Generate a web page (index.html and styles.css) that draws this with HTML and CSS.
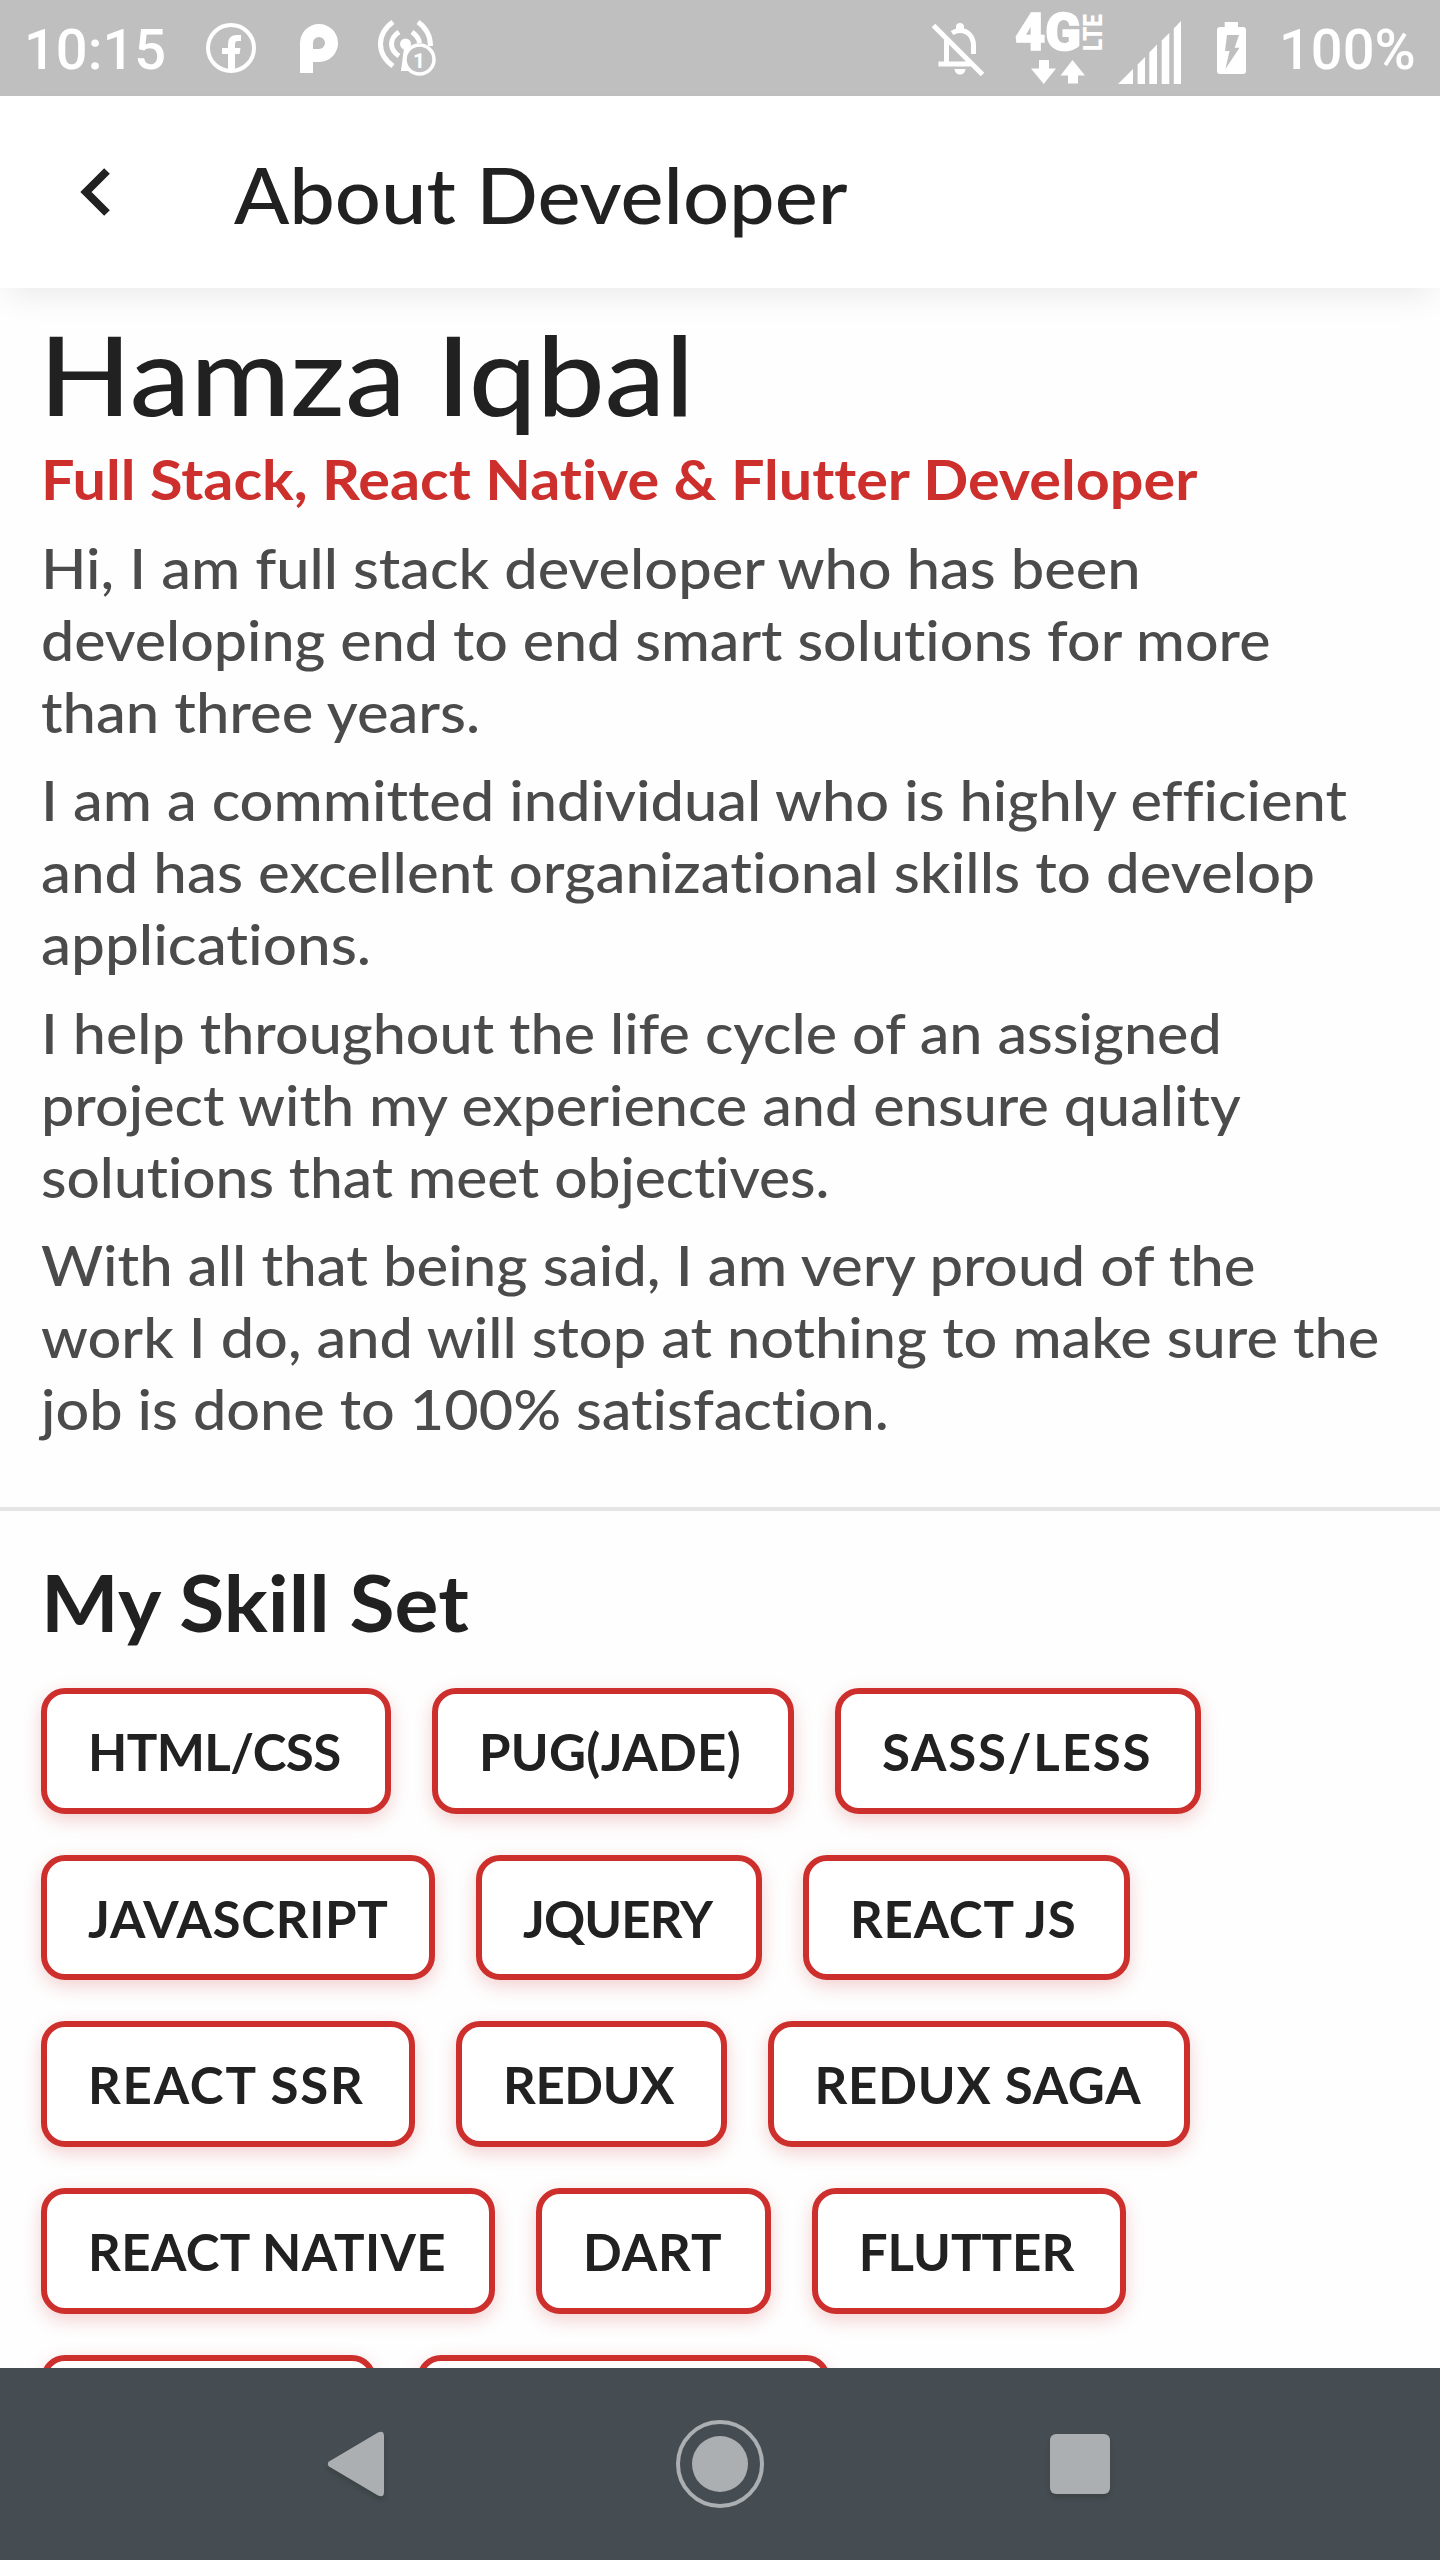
FILE: index.html
```html
<!DOCTYPE html>
<html lang="en">
<head>
<meta charset="utf-8">
<title>About Developer</title>
<link rel="stylesheet" href="styles.css">
</head>
<body>
<div class="screen">
  <div class="status">
    <span class="status-time">10:15</span>
    <svg width="64" height="96" viewBox="200 0 64 96"><circle cx="231" cy="48" r="23" fill="none" stroke="#fff" stroke-width="4"/><path fill="#fff" d="M228 72V54h-6v-6h6v-4q0-9 9-9h4v6h-3q-3 0-3 3v4h5.5l-1 6H235v18z"/></svg>
    <svg width="96" height="96" viewBox="264 0 96 96"><path fill="#fff" fill-rule="evenodd" d="M300 73V43a19 19 0 1 1 19 19h-6v11zM313 49h6a6 6 0 1 0-6-6z"/></svg>
    <svg width="90" height="96" viewBox="360 0 90 96"><g fill="none" stroke="#fff" stroke-width="5"><path d="M393 22q-12.500 9-12.500 22t12.500 22"/><path d="M399 32q-7.500 5-7.500 12t7.500 12"/><path d="M418 22q12.500 9 12.500 24"/><path d="M412 32q7 5 7.500 11"/></g><circle cx="405.500" cy="44" r="5.500" fill="#fff"/><path fill="#fff" d="M404 48h4v23h-7z"/><circle cx="419.500" cy="59.500" r="14.500" fill="#bfbfbf" stroke="#fff" stroke-width="3.500"/><text class="badge-number" x="419" y="67.500" text-anchor="middle">1</text></svg>
    <span class="status-gap"></span>
    <svg width="80" height="96" viewBox="920 0 80 96"><g fill="none" stroke="#fff" stroke-width="5"><path d="M933.500 25.500l49 49M938.500 64h32M946.500 40v23M952 33q4-2.500 8-2.500c8.500 0 13.500 7 13.500 15V54"/></g><path fill="#fff" d="M956 31v-4a4 4 0 0 1 8 0v4zM954.500 69h11a5.500 5.500 0 0 1-11 0z"/></svg>
    <svg width="110" height="96" viewBox="1000 0 110 96"><text class="net" x="1015" y="50" textLength="66" lengthAdjust="spacingAndGlyphs">4G</text><text class="lte" transform="translate(1102 51) rotate(-90)" textLength="37" lengthAdjust="spacingAndGlyphs">LTE</text><path fill="#fff" d="M1039 60h10v8.500h7L1043.700 84 1031 68.500h8zM1072.500 60l12.500 15.500h-7v8h-10v-8h-7.500z"/></svg>
    <svg width="80" height="96" viewBox="1110 0 80 96"><path fill="#fff" d="M1118 84l15-15v15zM1137.600 84V64.500l7.400-7.500v27zM1149.300 84V52.500l7.700-8v39.500zM1161.700 84V40.500l7.600-7.500v51zM1173.800 84V28.500l7.200-7.500v63z"/></svg>
    <svg width="89" height="96" viewBox="1190 0 89 96"><path fill="#fff" fill-rule="evenodd" d="M1224.700 27v-5h13.300v5h5q3 0 3 3v41q0 3-3 3h-23q-3 0-3-3V30q0-3 3-3zM1227 35l-2 16h4.500l-4.100 18 14.100-21.300h-4.800L1239 35z"/></svg>
    <span class="status-battery">100%</span>
  </div>

  <div class="header">
    <svg class="back" width="48" height="60" viewBox="72 162 48 60"><path d="M107 171l-21 21 21 21" fill="none" stroke="#212121" stroke-width="8"/></svg>
    <h1 class="header-title">About Developer</h1>
  </div>

  <div class="content">
    <div class="profile">
      <h2 class="name">Hamza Iqbal</h2>
      <div class="role">Full Stack, React Native &amp; Flutter Developer</div>
      <p class="bio"><span class="line l1">Hi, I am full stack developer who has been</span> <span class="line l2">developing end to end smart solutions for more</span> <span class="line l3">than three years.</span></p>
      <p class="bio"><span class="line l4">I am a committed individual who is highly efficient</span> <span class="line l5">and has excellent organizational skills to develop</span> <span class="line l6">applications.</span></p>
      <p class="bio"><span class="line l7">I help throughout the life cycle of an assigned</span> <span class="line l8">project with my experience and ensure quality</span> <span class="line l9">solutions that meet objectives.</span></p>
      <p class="bio"><span class="line l10">With all that being said, I am very proud of the</span> <span class="line l11">work I do, and will stop at nothing to make sure the</span> <span class="line l12">job is done to 100% satisfaction.</span></p>
    </div>
    <div class="skills">
      <h3 class="skills-title">My Skill Set</h3>
      <div class="chip-rows">
        <div class="chip-row"><span class="chip html">HTML/CSS</span><span class="chip pug">PUG(JADE)</span><span class="chip sass">SASS/LESS</span></div>
        <div class="chip-row"><span class="chip javascript">JAVASCRIPT</span><span class="chip jquery">JQUERY</span><span class="chip react">REACT JS</span></div>
        <div class="chip-row"><span class="chip ssr">REACT SSR</span><span class="chip redux">REDUX</span><span class="chip saga">REDUX SAGA</span></div>
        <div class="chip-row"><span class="chip native">REACT NATIVE</span><span class="chip dart">DART</span><span class="chip flutter">FLUTTER</span></div>
        <div class="chip-row"><span class="chip partial-a"></span><span class="chip partial-b"></span></div>
      </div>
    </div>
  </div>

  <div class="navbar">
    <svg width="120" height="120" viewBox="0 0 120 120"><path class="nav-shape lifted" d="M29 57.500L78 28.500Q84 26 84 32v56q0 6-6 3.500L29 62.500q-2.500-2.500 0-5z"/></svg>
    <svg width="120" height="120" viewBox="0 0 120 120"><circle class="nav-shape" cx="60" cy="60" r="28"/><circle class="nav-ring" cx="60" cy="60" r="42"/></svg>
    <svg width="120" height="120" viewBox="0 0 120 120"><rect class="nav-shape lifted" x="30" y="30" width="60" height="60" rx="6"/></svg>
  </div>
</div>
</body>
</html>
```
FILE: styles.css
```css
* { box-sizing: border-box; }
body { margin: 0; background: #fefefe; font-family: Lato, "Open Sans", sans-serif; font-variant-ligatures: none; color: #212121; }
h1, h2, h3, p { margin: 0; }
svg { display: block; flex: none; }

.screen { width: 1440px; height: 2560px; display: flex; flex-direction: column; overflow: hidden; background: #fefefe; }

.status { flex: none; height: 96px; display: flex; align-items: center; background: #bfbfbf; color: #fff; font-family: Roboto, sans-serif; font-size: 56px; font-weight: 500; line-height: 96px; padding-left: 24px; }
.status-time { width: 176px; padding-top: 4px; }
.status-gap { width: 470px; flex: none; }
.status-battery { padding-top: 4px; white-space: nowrap; }
.badge-number { font: 700 21px Roboto, sans-serif; fill: #fff; }
.net { font: 900 51px Roboto, sans-serif; fill: #fff; stroke: #fff; stroke-width: 1.5px; }
.lte { font: 900 25px Roboto, sans-serif; fill: #fff; }

.header { flex: none; height: 192px; display: flex; align-items: center; padding-left: 72px; background: #fff; box-shadow: 0 16px 30px -8px rgba(0, 0, 0, .08); position: relative; }
.header-title { margin-left: 114px; padding-top: 4px; font-size: 78px; font-weight: 500; line-height: 100px; transform: scaleX(1.041); transform-origin: left; }

.content { flex: 1; min-height: 0; overflow: hidden; }
.profile { height: 1223px; padding: 25px 0 0 41px; border-bottom: 4px solid #e5e5e5; }
.name { width: max-content; margin-left: -2px; font-size: 110px; font-weight: 500; line-height: 120px; transform: scaleX(1.10); transform-origin: left; }
.role { width: max-content; margin-top: 10px; font-size: 56px; font-weight: 700; line-height: 72px; color: #cd2f2c; white-space: nowrap; transform: scaleX(1.06); transform-origin: left; }
.bio { margin-top: 16.5px; font-size: 56px; font-weight: 500; line-height: 72px; color: #4b4b4b; }
.line { display: block; width: max-content; white-space: nowrap; transform-origin: left; }
.l1 { transform: scaleX(1.063); }
.l2 { transform: scaleX(1.056); }
.l3 { transform: scaleX(1.066); }
.l4 { transform: scaleX(1.063); }
.l5 { transform: scaleX(1.071); }
.l6 { transform: scaleX(1.075); }
.l7 { transform: scaleX(1.058); }
.l8 { transform: scaleX(1.059); }
.l9 { transform: scaleX(1.0475); }
.l10 { transform: scaleX(1.069); }
.l11 { transform: scaleX(1.062); }
.l12 { transform: scaleX(1.0605); }

.skills { padding: 41px 0 0 41px; }
.skills-title { width: max-content; font-size: 78px; font-weight: 700; line-height: 100px; transform: scaleX(1.055); transform-origin: left; }
.chip-rows { margin-top: 36px; display: flex; flex-direction: column; gap: 41px; }
.chip-row { display: flex; gap: 41px; }
.chip { flex: none; height: 125.7px; padding-left: 41px; border: 6px solid #cd2f2c; border-radius: 24px; background: #fff; box-shadow: 0 6px 18px rgba(205, 47, 44, .22); font-size: 51px; font-weight: 700; line-height: 115.5px; white-space: nowrap; }
.html { width: 350px; letter-spacing: -.6px; }
.pug { width: 362px; letter-spacing: .3px; }
.sass { width: 366.4px; letter-spacing: 1.8px; }
.javascript { width: 394px; letter-spacing: .7px; }
.jquery { width: 286px; letter-spacing: -.9px; }
.react { width: 326.7px; letter-spacing: .8px; }
.ssr { width: 374px; letter-spacing: 1.8px; }
.redux { width: 270.5px; letter-spacing: -.4px; }
.saga { width: 422.4px; letter-spacing: .8px; }
.native { width: 454px; letter-spacing: .4px; }
.dart { width: 234.7px; letter-spacing: 1px; }
.flutter { width: 314px; letter-spacing: 0; }
.partial-a { width: 334.5px; }
.partial-b { width: 413.5px; }

.navbar { flex: none; height: 192px; display: flex; align-items: center; justify-content: center; gap: 240px; background: #454c52; }
.nav-shape { fill: #acafb2; }
.nav-ring { fill: none; stroke: #acafb2; stroke-width: 4px; }
.lifted { filter: drop-shadow(0 4px 2px rgba(50, 60, 55, .5)); }
```
